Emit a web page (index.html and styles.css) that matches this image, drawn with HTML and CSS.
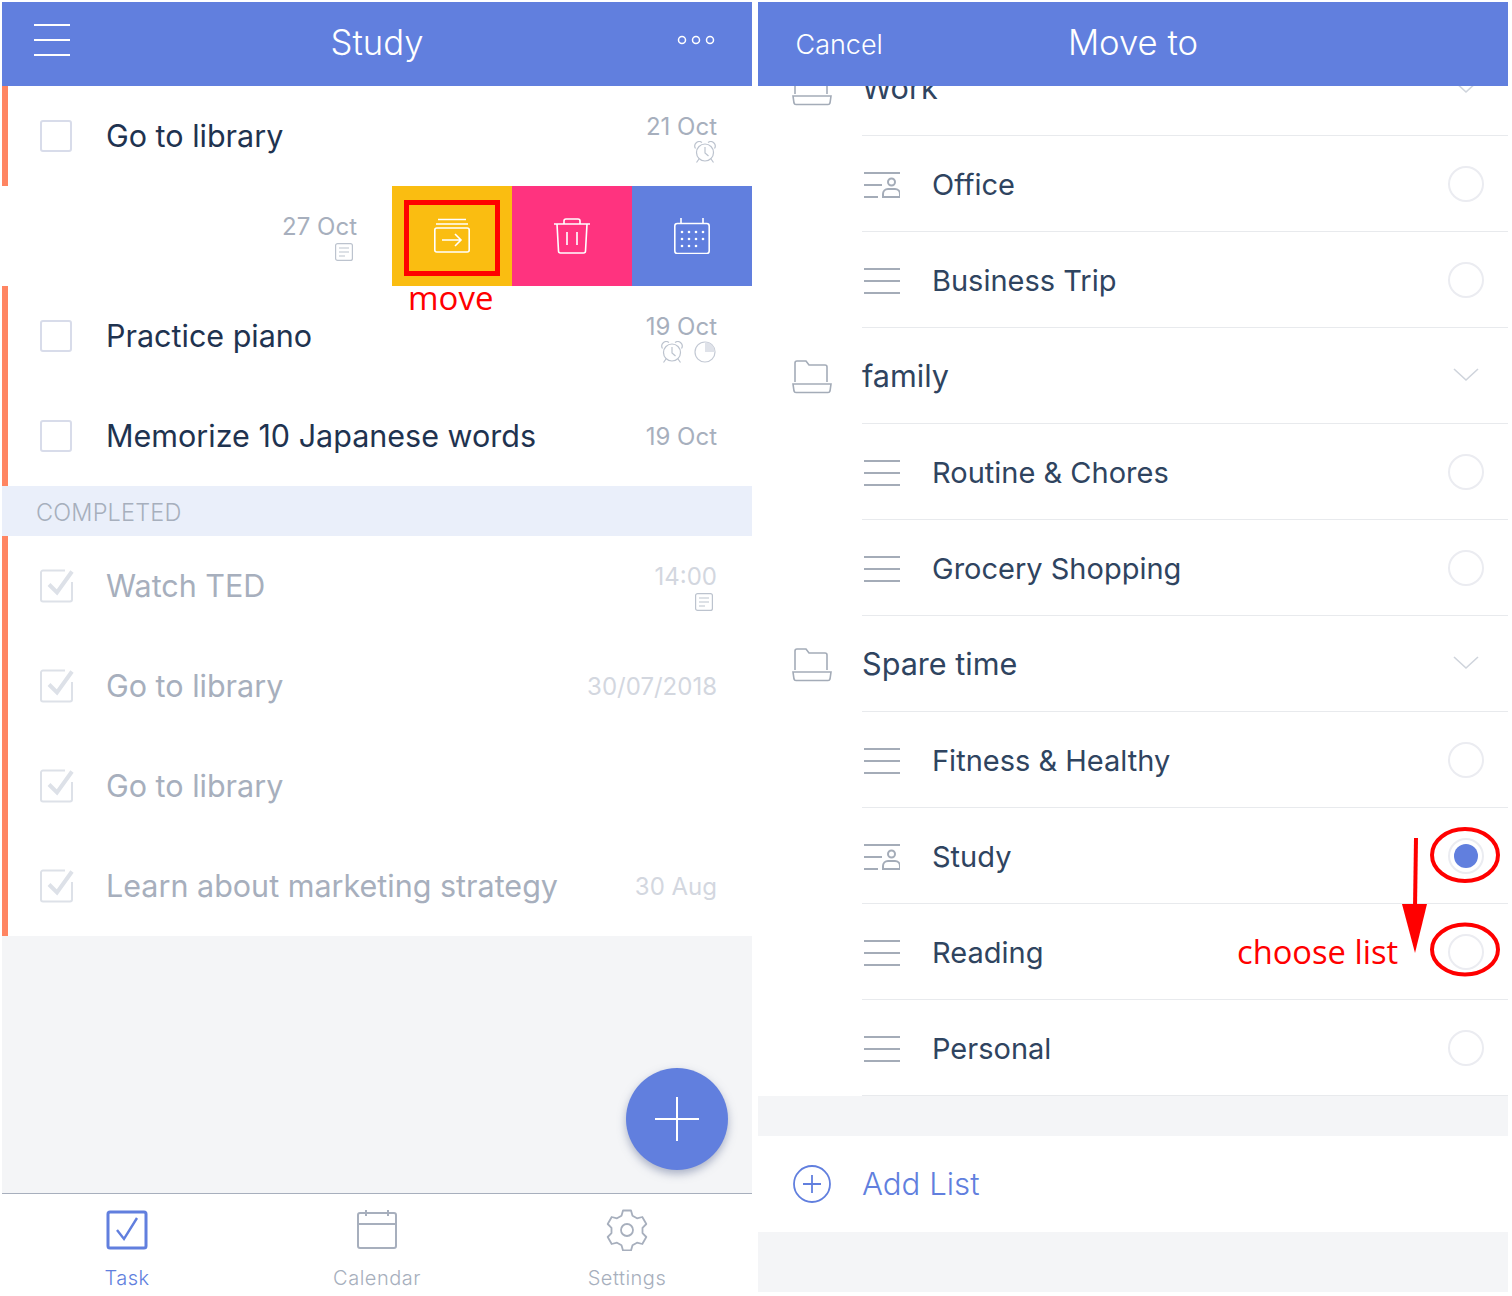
FILE: index.html
```html
<!DOCTYPE html>
<html lang="en">
<head>
<meta charset="utf-8">
<title>Study / Move to</title>
<link rel="stylesheet" href="styles.css">
</head>
<body>
<svg class="defs" width="0" height="0" aria-hidden="true">
  <symbol id="alarm" viewBox="0 0 22 22"><g fill="none" stroke="currentColor" stroke-width="1.200"><circle cx="11" cy="11.5" r="8.500"/><path d="M11 6v6l3.500 3M1.500 7.500a4.500 4.500 0 0 1 6.500-6M20.500 7.500a4.500 4.500 0 0 0-6.500-6M5 18l-2.500 3.500M17 18l2.500 3.500"/></g></symbol>
  <symbol id="note" viewBox="0 0 18 18"><g fill="none" stroke="currentColor" stroke-width="1.200"><rect x=".6" y=".6" width="16.800" height="16.800" rx="2"/><path d="M4 5h10M4 9h10M4 13h6"/></g></symbol>
  <symbol id="check" viewBox="0 0 34 34"><g fill="none" stroke="#dde1e8"><path stroke-width="2" d="M25 1.500H3a2 2 0 0 0-2 2v27a2 2 0 0 0 2 2h27a2 2 0 0 0 2-2V13"/><path stroke-width="4" d="M9 15.500l8 8L32 2.500"/></g></symbol>
  <symbol id="folder" viewBox="0 0 40 34"><g fill="none" stroke="#a4acb8" stroke-width="1.600"><path d="M3 22V3a2 2 0 0 1 2-2h9l3 4h16a2 2 0 0 1 2 2v15"/><path d="M1 24h38l-1 7a2 2 0 0 1-2 1.500H4a2 2 0 0 1-2-1.500z"/></g></symbol>
  <symbol id="lines" viewBox="0 0 36 26"><path fill="none" stroke="#a4acb8" stroke-width="2" d="M0 1h36M0 13h36M0 25h36"/></symbol>
  <symbol id="people" viewBox="0 0 36 26"><g fill="none" stroke="#a4acb8" stroke-width="2"><path d="M0 1h36M0 13h18M0 25h14"/><circle cx="27.500" cy="10" r="3.500"/><path d="M19 25v-3a5 5 0 0 1 5-5h7a5 5 0 0 1 5 5v3z"/></g></symbol>
  <symbol id="chev" viewBox="0 0 26 14"><path fill="none" stroke="#cfd4dc" stroke-width="1.600" d="M1 1l12 11L25 1"/></symbol>
</svg>

<main class="stage">
  <section class="phone">
    <header class="bar">
      <svg class="burger" width="36" height="32" viewBox="0 0 36 32"><path fill="none" stroke="#fff" stroke-width="2" d="M0 1h36M0 16h36M0 31h36"/></svg>
      <h1 class="bar-title">Study</h1>
      <svg class="dots" width="38" height="10" viewBox="0 0 38 10"><g fill="none" stroke="#fff" stroke-width="1.500"><circle cx="5" cy="5" r="3.500"/><circle cx="19" cy="5" r="3.500"/><circle cx="33" cy="5" r="3.500"/></g></svg>
    </header>

    <div class="task striped">
      <span class="box"></span><span class="task-name">Go to library</span>
      <div class="meta"><span>21 Oct</span><div class="meta-icons"><svg class="mi"><use href="#alarm"/></svg></div></div>
    </div>

    <div class="swipe">
      <div class="meta swipe-meta"><span>27 Oct</span><div class="meta-icons"><svg class="mn"><use href="#note"/></svg></div></div>
      <div class="act act-move">
        <svg width="36" height="36" viewBox="0 0 36 36"><g fill="none" stroke="#fff" stroke-width="1.600"><path d="M4 1.500h28M2 6h32"/><rect x=".8" y="10" width="34.400" height="24" rx="2"/><path d="M8 22h19M21 16l6 6-6 6"/></g></svg>
      </div>
      <div class="act act-del">
        <svg width="36" height="36" viewBox="0 0 36 36"><g fill="none" stroke="#fff" stroke-width="1.600"><path d="M0 6h36M10 6V3a2 2 0 0 1 2-2h12a2 2 0 0 1 2 2v3M3 6l1.500 27a2 2 0 0 0 2 2h23a2 2 0 0 0 2-2L33 6M13 14v13M23 14v13"/></g></svg>
      </div>
      <div class="act act-cal">
        <svg width="36" height="36" viewBox="0 0 36 36"><g fill="none" stroke="#fff" stroke-width="1.600"><rect x=".8" y="5.500" width="34.400" height="30" rx="2.500"/><path d="M7 0v6M29 0v6"/></g><g fill="#fff"><circle cx="8" cy="14" r="1.300"/><circle cx="15" cy="14" r="1.300"/><circle cx="22" cy="14" r="1.300"/><circle cx="29" cy="14" r="1.300"/><circle cx="8" cy="21" r="1.300"/><circle cx="15" cy="21" r="1.300"/><circle cx="22" cy="21" r="1.300"/><circle cx="29" cy="21" r="1.300"/><circle cx="8" cy="28" r="1.300"/><circle cx="15" cy="28" r="1.300"/><circle cx="22" cy="28" r="1.300"/></g></svg>
      </div>
    </div>

    <div class="task striped">
      <span class="box"></span><span class="task-name">Practice piano</span>
      <div class="meta"><span>19 Oct</span><div class="meta-icons"><svg class="mi"><use href="#alarm"/></svg>
        <svg class="mi" viewBox="0 0 22 22"><circle cx="11" cy="11" r="10" fill="none" stroke="#c3c9d4" stroke-width="1.200"/><path d="M11 1a10 10 0 0 1 10 10H11z" fill="#dfe2e9"/></svg></div></div>
    </div>
    <div class="task striped">
      <span class="box"></span><span class="task-name">Memorize 10 Japanese words</span>
      <div class="meta meta-single"><span>19 Oct</span></div>
    </div>

    <div class="section-band">COMPLETED</div>

    <div class="task striped done">
      <svg class="tick"><use href="#check"/></svg><span class="task-name">Watch TED</span>
      <div class="meta"><span>14:00</span><div class="meta-icons"><svg class="mn"><use href="#note"/></svg></div></div>
    </div>
    <div class="task striped done">
      <svg class="tick"><use href="#check"/></svg><span class="task-name">Go to library</span>
      <div class="meta meta-single"><span>30/07/2018</span></div>
    </div>
    <div class="task striped done">
      <svg class="tick"><use href="#check"/></svg><span class="task-name">Go to library</span>
    </div>
    <div class="task striped done">
      <svg class="tick"><use href="#check"/></svg><span class="task-name">Learn about marketing strategy</span>
      <div class="meta meta-single"><span>30 Aug</span></div>
    </div>

    <div class="filler">
      <button class="fab" aria-label="Add"><svg width="44" height="44" viewBox="0 0 44 44"><path fill="none" stroke="#fff" stroke-width="2" d="M22 0v44M0 22h44"/></svg></button>
    </div>

    <nav class="tabs">
      <div class="tab tab-on">
        <svg width="42" height="42" viewBox="0 0 42 42"><g fill="none" stroke="#617fde"><rect x="2" y="3" width="38" height="36" rx="2" stroke-width="3"/><path stroke-width="2.400" d="M11 21l7 9L31 9"/></g></svg>
        <span>Task</span>
      </div>
      <div class="tab">
        <svg width="42" height="42" viewBox="0 0 42 42"><g fill="none" stroke="#a7afbd" stroke-width="2"><rect x="2" y="4" width="38" height="35" rx="2"/><path d="M2 15h38M10 1v6M32 1v6"/></g></svg>
        <span>Calendar</span>
      </div>
      <div class="tab">
        <svg width="42" height="42" viewBox="0 0 42 42"><g fill="none" stroke="#a7afbd" stroke-width="1.800" stroke-linejoin="round"><path d="M17 1.500h8l1.500 5.200 4.500 2.600 5.300-1.300 4 7-3.800 3.900v5.200l3.800 3.900-4 7-5.300-1.300-4.500 2.600-1.500 5.200h-8l-1.500-5.200-4.500-2.600-5.300 1.300-4-7 3.800-3.900v-5.200L1.700 15l4-7L11 9.300l4.500-2.600z"/><circle cx="21" cy="21" r="6"/></g></svg>
        <span>Settings</span>
      </div>
    </nav>
  </section>

  <section class="phone phone-right">
    <header class="bar bar-move">
      <span class="cancel">Cancel</span>
      <h1 class="bar-title">Move to</h1>
    </header>
    <div class="lists">
      <div class="lists-scroll">
        <div class="group"><svg class="ficon"><use href="#folder"/></svg><div class="row-line"><span class="group-name">Work</span><svg class="chev"><use href="#chev"/></svg></div></div>
        <div class="item"><svg class="licon"><use href="#people"/></svg><span class="item-name">Office</span><span class="radio"></span></div>
        <div class="item"><svg class="licon"><use href="#lines"/></svg><span class="item-name">Business Trip</span><span class="radio"></span></div>
        <div class="group"><svg class="ficon"><use href="#folder"/></svg><div class="row-line"><span class="group-name">family</span><svg class="chev"><use href="#chev"/></svg></div></div>
        <div class="item"><svg class="licon"><use href="#lines"/></svg><span class="item-name">Routine &amp; Chores</span><span class="radio"></span></div>
        <div class="item"><svg class="licon"><use href="#lines"/></svg><span class="item-name">Grocery Shopping</span><span class="radio"></span></div>
        <div class="group"><svg class="ficon"><use href="#folder"/></svg><div class="row-line"><span class="group-name">Spare time</span><svg class="chev"><use href="#chev"/></svg></div></div>
        <div class="item"><svg class="licon"><use href="#lines"/></svg><span class="item-name">Fitness &amp; Healthy</span><span class="radio"></span></div>
        <div class="item"><svg class="licon"><use href="#people"/></svg><span class="item-name">Study</span><span class="radio radio-on"></span></div>
        <div class="item"><svg class="licon"><use href="#lines"/></svg><span class="item-name">Reading</span><span class="radio"></span></div>
        <div class="item"><svg class="licon"><use href="#lines"/></svg><span class="item-name">Personal</span><span class="radio"></span></div>
      </div>
    </div>
    <div class="add-row">
      <svg width="40" height="40" viewBox="0 0 40 40"><g fill="none" stroke="#617fde" stroke-width="1.800"><circle cx="20" cy="20" r="18"/><path d="M20 11v18M11 20h18"/></g></svg>
      <span>Add List</span>
    </div>
  </section>

  <div class="mark-box"></div>
  <span class="mark-move">move</span>
  <span class="mark-choose">choose list</span>
  <svg class="mark-ink" width="110" height="160" viewBox="0 0 110 160"><g fill="none" stroke="#f00" stroke-width="4"><ellipse cx="75" cy="28" rx="33" ry="26"/><ellipse cx="75" cy="122.500" rx="33" ry="25"/></g><path fill="none" stroke="#f00" stroke-width="4" d="M26 11l-1 70"/><path fill="#f00" d="M12 77h25l-12 49z"/></svg>
</main>
</body>
</html>
```
FILE: styles.css
```css
* { box-sizing: border-box; }
html, body { margin: 0; padding: 0; background: #fff; }
body { font-family: Inter, "Liberation Sans", sans-serif; color: #1f3350; }
.defs { position: absolute; }

.stage { position: relative; display: flex; gap: 6px; width: 1512px; height: 1296px; padding: 2px 4px 4px 2px; }
.phone { width: 750px; height: 1290px; display: flex; flex-direction: column; background: #fff; }
.phone-right { background: #f4f5f7; }

.bar { position: relative; z-index: 2; flex: none; height: 84px; background: #617fde; color: #fff; display: flex; align-items: center; justify-content: center; }
.bar-title { margin: -4px 0 0; font-size: 34.700px; font-weight: 300; }
.burger { position: absolute; left: 32px; top: 22px; }
.dots { position: absolute; right: 37px; top: 33px; }
.cancel { position: absolute; left: 37.500px; top: 26px; font-size: 27px; font-weight: 300; }

.task { flex: none; height: 100px; display: flex; align-items: center; padding: 0 35px 0 38px; }
.striped { border-left: 6px solid #ff8562; padding-left: 32px; }
.box { flex: none; width: 32px; height: 32px; border: 2px solid #d8dcea; border-radius: 3px; }
.tick { flex: none; width: 34px; height: 34px; margin-right: -2px; }
.task-name { margin: -1px 0 0 34px; font-size: 30.500px; font-weight: 400; white-space: nowrap; }
.done .task-name { color: #a7afbd; }
.done .meta { color: #d3d7df; }

.meta { margin-left: auto; margin-top: 3px; display: flex; flex-direction: column; align-items: flex-end; font-size: 24px; line-height: 28px; color: #a7afbd; }
.meta-single { margin-top: 2px; }
.meta-icons { display: flex; gap: 11px; height: 22px; align-items: center; padding-right: 1px; }
.mi { width: 22px; height: 22px; color: #bcc3ce; }
.mn { width: 18px; height: 18px; color: #bcc3ce; margin-right: 3px; }

.swipe { flex: none; height: 100px; display: flex; align-items: center; }
.swipe-meta { margin-left: 0; width: 355px; }
.act { flex: none; width: 120px; height: 100px; display: flex; align-items: center; justify-content: center; }
.act-move { margin-left: 35px; background: #fabd11; }
.act-del { background: #ff337f; }
.act-cal { background: #617fde; }

.section-band { flex: none; height: 50px; padding: 2px 0 0 34px; display: flex; align-items: center; background: #eaeffa; color: #a7afbd; font-size: 23.500px; letter-spacing: .18px; font-weight: 300; }

.filler { flex: 1; position: relative; background: #f4f5f7; border-bottom: 1px solid #a7afbd; }
.fab { position: absolute; left: 624px; top: 132px; width: 102px; height: 102px; padding: 0; border: 0; border-radius: 50%; background: #617fde; display: flex; align-items: center; justify-content: center; box-shadow: 0 4px 9px rgba(95, 110, 150, .5); }

.tabs { flex: none; height: 98px; display: flex; }
.tab { flex: 1; display: flex; flex-direction: column; align-items: center; padding-top: 15px; gap: 14px; font-size: 20px; letter-spacing: .5px; line-height: 26px; font-weight: 300; color: #a7afbd; }
.tab-on { color: #617fde; }

.lists { flex: none; height: 1010px; overflow: hidden; background: #fff; }
.lists-scroll { margin-top: -46px; }
.group { height: 96px; display: flex; align-items: center; padding-left: 34px; }
.ficon { flex: none; width: 40px; height: 34px; margin-top: 1px; }
.row-line { flex: 1; height: 96px; margin-left: 30px; padding-right: 29px; display: flex; align-items: center; justify-content: space-between; border-bottom: 1px solid #e8eaed; }
.group-name { font-size: 30.600px; color: #2f4460; }
.chev { width: 26px; height: 14px; margin-top: -2px; }
.item { height: 96px; margin-left: 104px; padding: 0 24px 0 2px; display: flex; align-items: center; border-bottom: 1px solid #e8eaed; }
.licon { flex: none; width: 36px; height: 26px; margin-top: 2px; }
.item-name { margin: 2px 0 0 32px; font-size: 29px; color: #2f4460; }
.radio { margin-left: auto; flex: none; width: 36px; height: 36px; border: 2px solid #ebecf1; border-radius: 50%; display: flex; align-items: center; justify-content: center; }
.radio-on::after { content: ""; width: 24px; height: 24px; border-radius: 50%; background: #617fde; }

.add-row { flex: none; height: 96px; margin-top: 40px; background: #fff; display: flex; align-items: center; padding-left: 34px; gap: 30px; font-size: 31.200px; font-weight: 300; color: #617fde; }

.mark-box { position: absolute; left: 404px; top: 200px; width: 96px; height: 76px; border: 5px solid #f00; }
.mark-move { position: absolute; left: 408px; top: 277px; font-family: "Open Sans", sans-serif; font-size: 33px; line-height: 42px; color: #f00; }
.mark-choose { position: absolute; left: 1237px; top: 930px; font-family: "Open Sans", sans-serif; font-size: 32.700px; line-height: 44px; color: #f00; white-space: nowrap; }
.mark-ink { position: absolute; left: 1390px; top: 827px; }
```
